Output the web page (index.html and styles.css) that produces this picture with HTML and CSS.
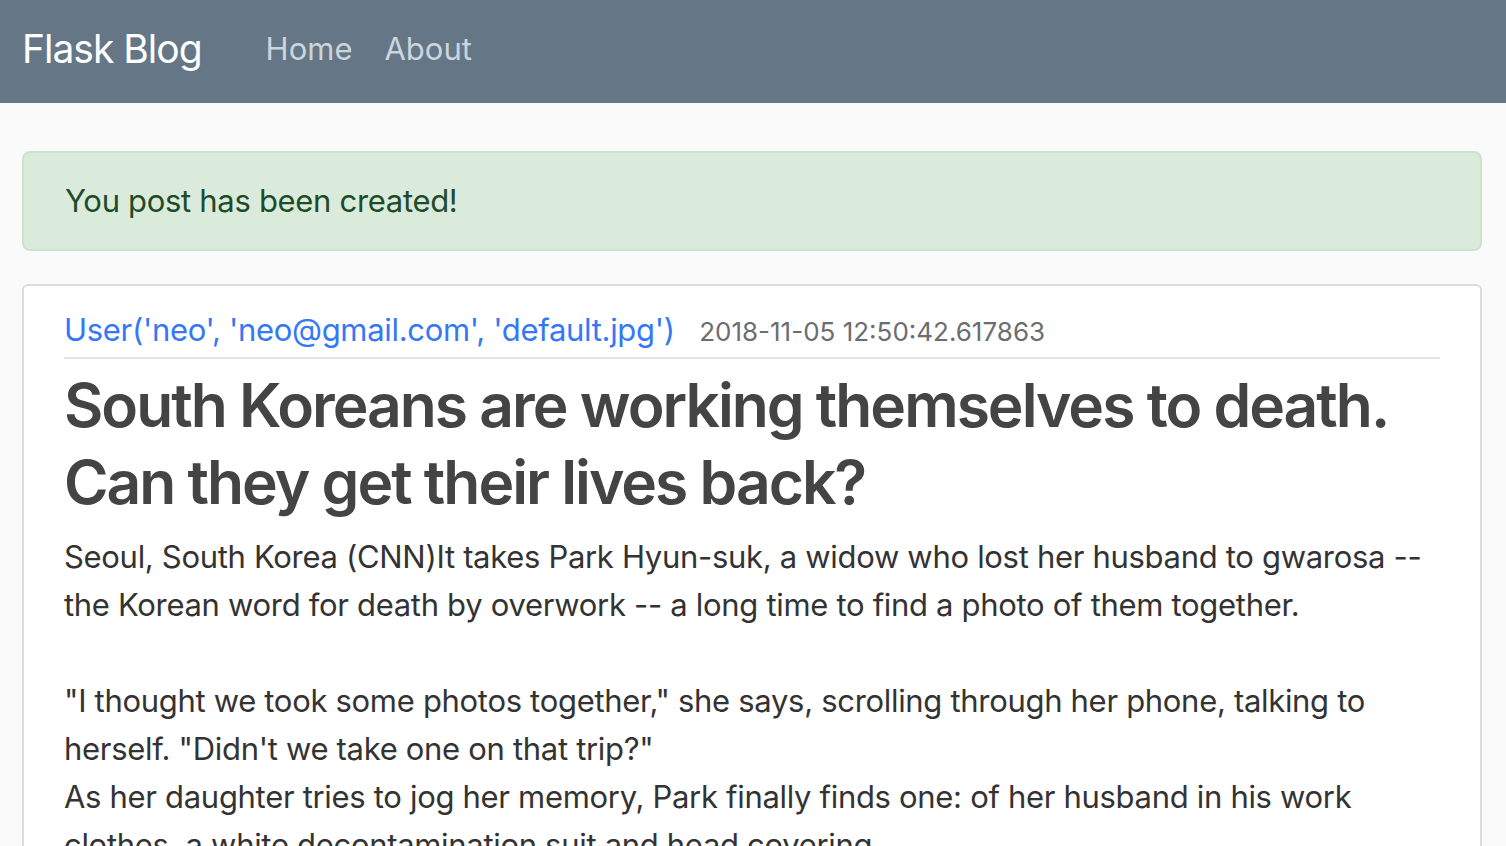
FILE: index.html
```html
<!DOCTYPE html>
<html lang="en">
<head>
<meta charset="utf-8">
<title>Flask Blog</title>
<link rel="stylesheet" href="styles.css">
</head>
<body>
<header class="site-header">
  <nav class="navbar">
    <a class="navbar-brand" href="#">Flask Blog</a>
    <div class="navbar-nav">
      <a class="nav-link" href="#">Home</a>
      <a class="nav-link" href="#">About</a>
    </div>
  </nav>
</header>
<main class="container">
  <div class="alert alert-success">You post has been created!</div>
  <article class="content-section">
    <div class="media-body">
      <div class="article-metadata">
        <a class="author" href="#">User('neo', 'neo@gmail.com', 'default.jpg')</a>
        <small class="text-muted">2018-11-05 12:50:42.617863</small>
      </div>
      <h2><a class="article-title" href="#">South Koreans are working themselves to death. Can they get their lives back?</a></h2>
      <p class="article-content">Seoul, South Korea (CNN)It takes Park Hyun-suk, a widow who lost her husband to gwarosa -- the Korean word for death by overwork -- a long time to find a photo of them together.

"I thought we took some photos together," she says, scrolling through her phone, talking to herself. "Didn't we take one on that trip?"
As her daughter tries to jog her memory, Park finally finds one: of her husband in his work clothes, a white decontamination suit and head covering.</p>
    </div>
  </article>
</main>
</body>
</html>
```

FILE: styles.css
```css
* { box-sizing: border-box; }

html, body { margin: 0; padding: 0; }

body {
  background: #fafafa;
  color: #333333;
  font-family: "Inter", "Liberation Sans", sans-serif;
  font-size: 31px;
  line-height: 48px;
  letter-spacing: -0.01em;
}

a { text-decoration: none; }

.site-header { background: #657787; }

.navbar {
  height: 103px;
  display: flex;
  align-items: center;
  padding: 0 22px 6px;
}

.navbar-brand {
  color: #ffffff;
  font-size: 39px;
  line-height: 60px;
  letter-spacing: -1px;
  margin-right: 48px;
}

.navbar-nav { display: flex; }

.nav-link {
  color: #cbd5db;
  font-size: 31px;
  line-height: 48px;
  letter-spacing: 0;
  padding: 0 16px;
}

.container {
  padding: 48px 24px 0 22px;
}

.alert {
  border: 2px solid #c9e5cd;
  background: #daebdc;
  color: #1e4b29;
  border-radius: 8px;
  padding: 24px 41px;
  margin-bottom: 33px;
}

.content-section {
  background: #ffffff;
  border: 2px solid #dcdcdc;
  border-radius: 6px;
  padding: 20px 40px;
}

.article-metadata {
  border-bottom: 2px solid #e3e3e3;
  padding-bottom: 1px;
  margin-bottom: 8px;
}

.author {
  color: #3478f6;
  margin-right: 16px;
}

.text-muted {
  color: #6b6d6f;
  font-size: 26px;
  letter-spacing: 0;
}

h2 {
  margin: 0 0 12px 0;
  font-size: 60.5px;
  line-height: 76.8px;
  font-weight: 600;
  letter-spacing: -0.033em;
}

.article-title { color: #444444; }

.article-content {
  margin: 0;
  white-space: pre-line;
}
```
